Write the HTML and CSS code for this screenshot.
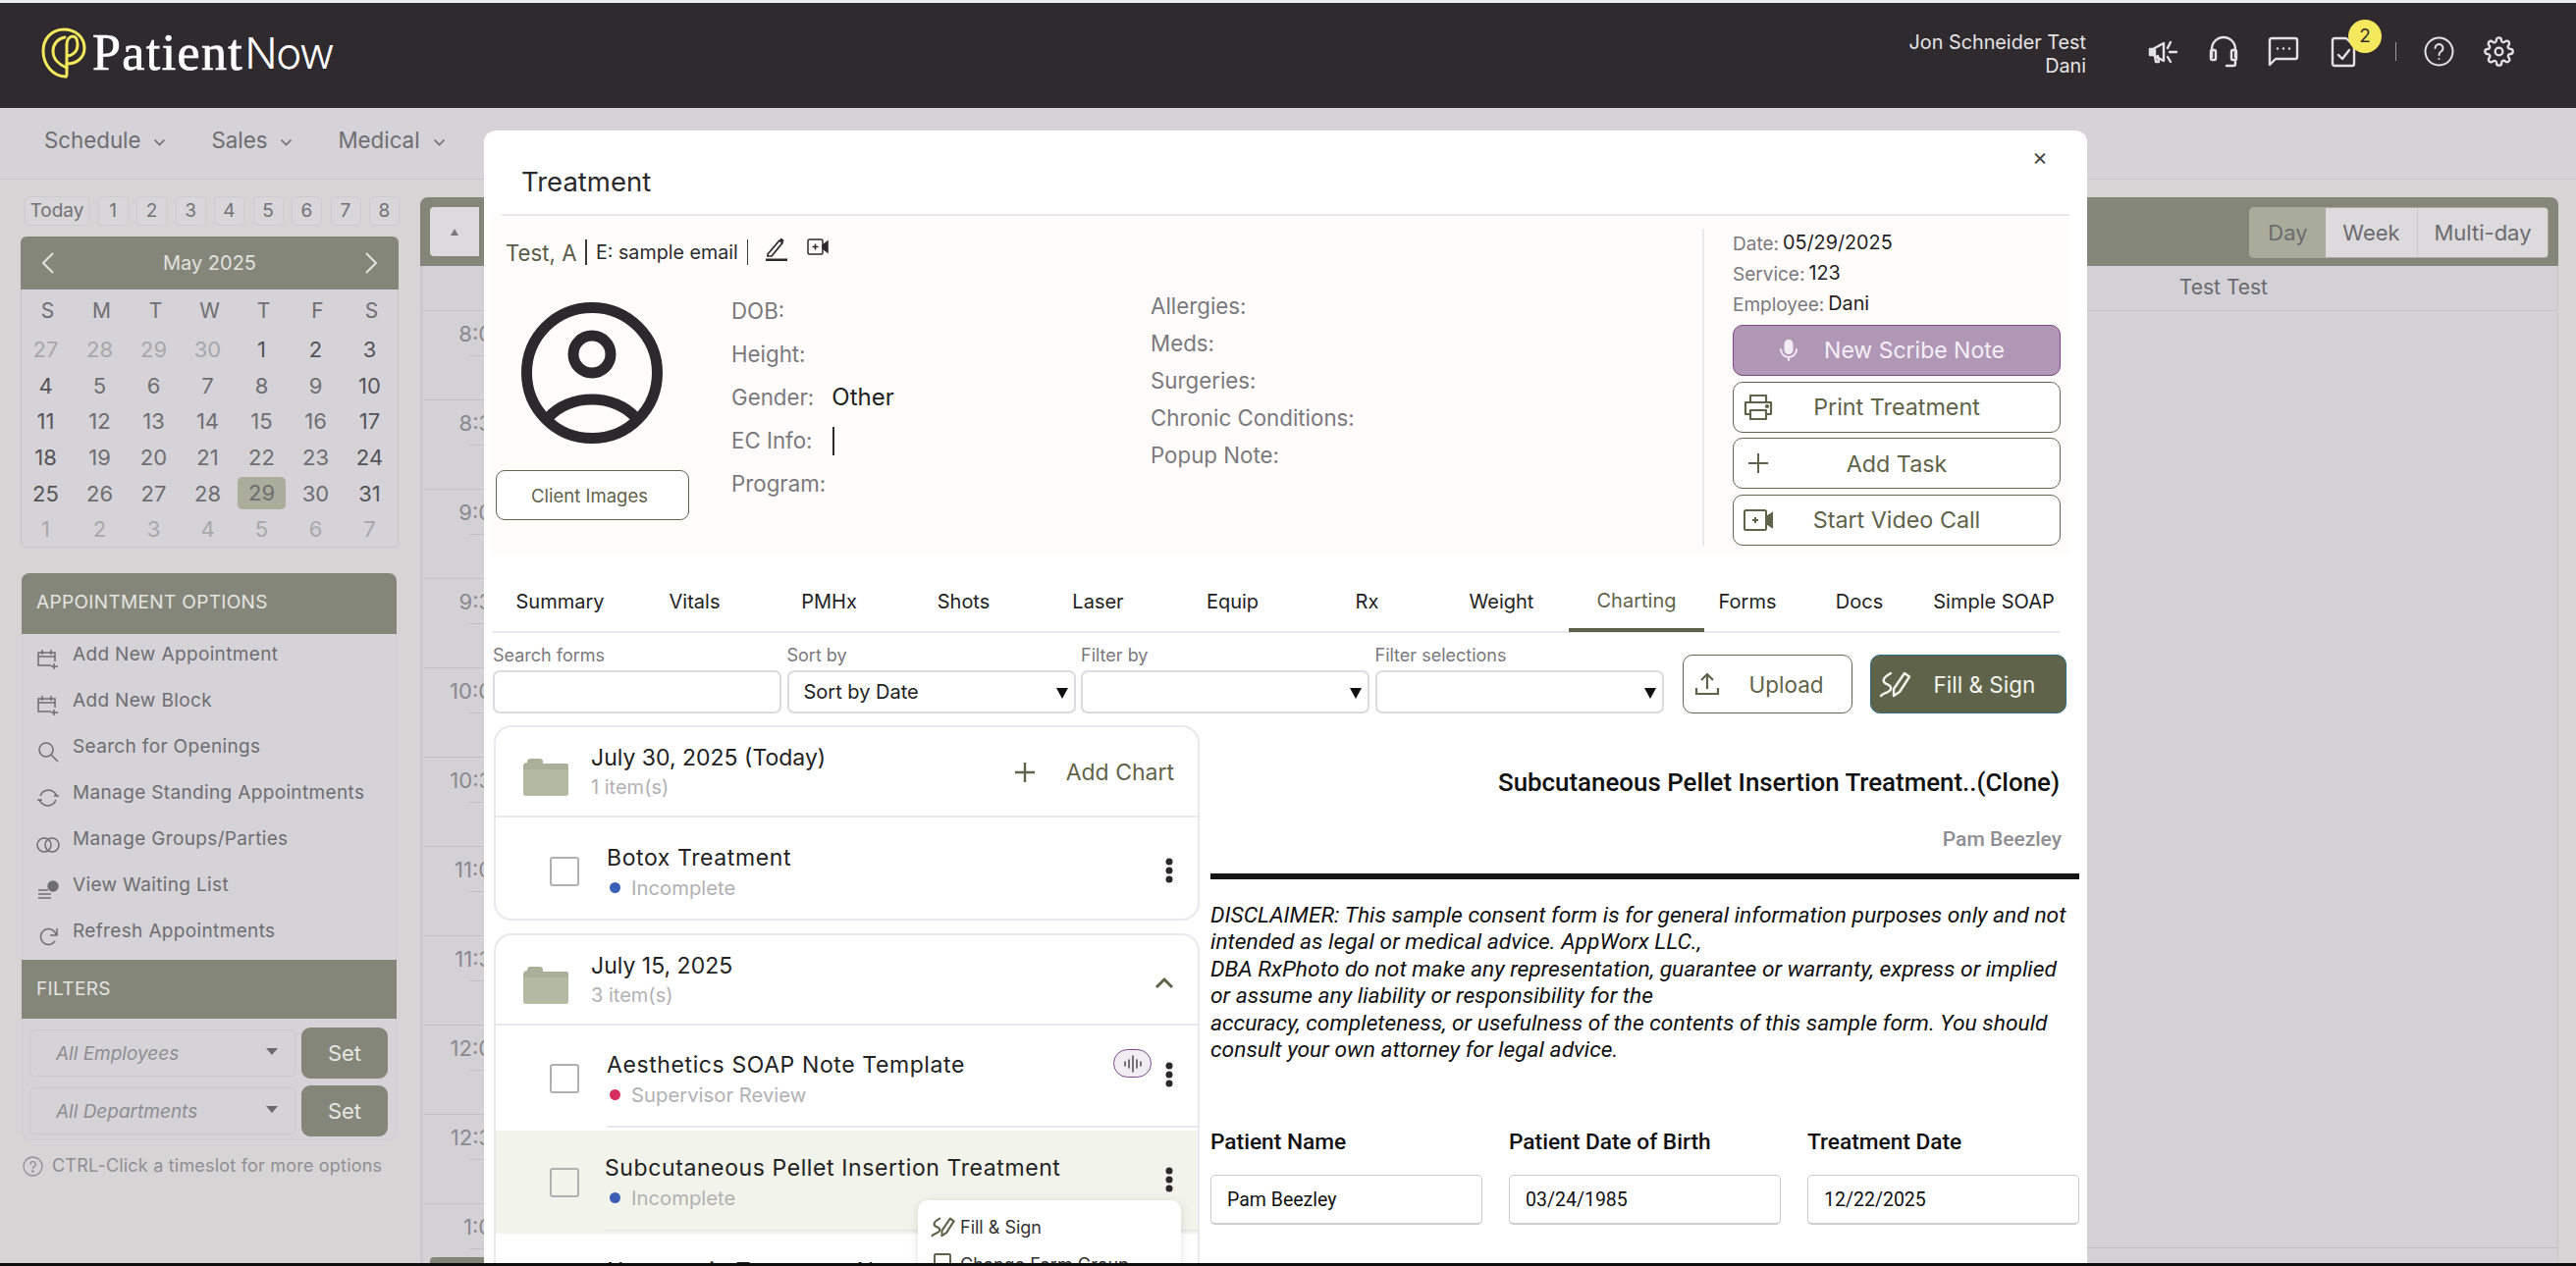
FILE: index.html
```html
<!DOCTYPE html>
<html lang="en">
<head>
<meta charset="utf-8">
<title>PatientNow - Treatment</title>
<link rel="stylesheet" href="styles.css">
</head>
<body>
<div class="topline"></div>
<header class="hdr">
  <div class="logo">
    <svg class="logo-mark" viewBox="0 0 46 52" fill="none" stroke="#f4e85c" stroke-width="3" stroke-linecap="round" stroke-linejoin="round">
      <path d="M25 50C12 50 2 38 2 24 2 11 11 2 23 2c12 0 21 8 21 19 0 10-8 16-18 16"/>
      <path d="M25 50c1 0 1-1 1-3V17c0-5 3-8 6-8 4 0 5 4 5 9 0 6-5 11-11 11"/>
      <path d="M24 10c-7 1-12 7-12 14 0 8 6 14 14 17"/>
    </svg>
    <span class="logo-a">Patient</span><span class="logo-b">Now</span>
  </div>
  <div class="hdr-right">
    <div class="hdr-user"><div>Jon Schneider Test</div><div>Dani</div></div>
    <div class="hdr-icons">
      <span class="hi"><svg width="32" height="26" viewBox="0 0 32 26" fill="none" stroke="#e4e2e4" stroke-width="2.4" stroke-linecap="round" stroke-linejoin="round"><path d="M2 10v6h3l11 6V4L5 10z"/><path d="M3 11v4h4v-4z" fill="#e4e2e4"/><path d="M7 16l1 7h3l-1-6"/><path d="M20 9l3-6M22 13h7M20 18l3 5"/></svg></span>
      <span class="hi"><svg width="30" height="33" viewBox="0 0 30 33" fill="none" stroke="#e4e2e4" stroke-width="2.4" stroke-linecap="round" stroke-linejoin="round"><path d="M3 22V14a12 12 0 0 1 24 0v8"/><rect x="2" y="15" width="5" height="10" rx="1.5"/><rect x="23" y="15" width="5" height="10" rx="1.5"/><path d="M27 25v4a2 2 0 0 1-2 2h-7"/></svg></span>
      <span class="hi"><svg width="32" height="31" viewBox="0 0 32 31" fill="none" stroke="#e4e2e4" stroke-width="2.4" stroke-linejoin="round"><path d="M2 29V4a2 2 0 0 1 2-2h24a2 2 0 0 1 2 2v17a2 2 0 0 1-2 2H8z"/><circle cx="10" cy="12.5" r="1.2" fill="#e4e2e4" stroke="none"/><circle cx="16" cy="12.5" r="1.2" fill="#e4e2e4" stroke="none"/><circle cx="22" cy="12.5" r="1.2" fill="#e4e2e4" stroke="none"/></svg></span>
      <span class="hi hi-task">
        <svg width="26" height="32" viewBox="0 0 26 32" fill="none" stroke="#e4e2e4" stroke-width="2.4" stroke-linecap="round" stroke-linejoin="round"><path d="M4 2h12l8 8v18a2 2 0 0 1-2 2H4a2 2 0 0 1-2-2V4a2 2 0 0 1 2-2z"/><path d="M8 19l4 4 7-9"/></svg>
        <span class="badge">2</span>
      </span>
      <span class="hdr-sep"></span>
      <span class="hi"><svg width="31" height="31" viewBox="0 0 31 31" fill="none" stroke="#e4e2e4" stroke-width="2" stroke-linecap="round"><circle cx="15.5" cy="15.5" r="14"/><path d="M11.5 12a4 4 0 1 1 6 3.5c-1.4.8-2 1.5-2 3.5"/><circle cx="15.5" cy="23" r="1" fill="#e4e2e4" stroke="none"/></svg></span>
      <span class="hi"><svg width="31" height="31" viewBox="0 0 24 24" fill="none" stroke="#e4e2e4" stroke-width="1.8" stroke-linecap="round" stroke-linejoin="round"><circle cx="12" cy="12" r="3"/><path d="M19.4 15a1.65 1.65 0 0 0 .33 1.82l.06.06a2 2 0 1 1-2.83 2.83l-.06-.06a1.65 1.65 0 0 0-2.82 1.17V21a2 2 0 1 1-4 0v-.09A1.65 1.65 0 0 0 7.26 19.74l-.06.06a2 2 0 1 1-2.83-2.83l.06-.06A1.65 1.65 0 0 0 3.26 14.09H3a2 2 0 1 1 0-4h.09A1.65 1.65 0 0 0 4.26 7.27l-.06-.06a2 2 0 1 1 2.83-2.83l.06.06A1.65 1.65 0 0 0 9.91 3.26V3a2 2 0 1 1 4 0v.09a1.65 1.65 0 0 0 2.82 1.17l.06-.06a2 2 0 1 1 2.83 2.83l-.06.06a1.65 1.65 0 0 0 1.17 2.82H21a2 2 0 1 1 0 4h-.09a1.65 1.65 0 0 0-1.51 1z"/></svg></span>
    </div>
  </div>
</header>

<nav class="nav">
  <span class="nav-item">Schedule <svg class="chev" viewBox="0 0 12 8" fill="none" stroke="currentColor" stroke-width="1.6"><path d="M1 1.5l5 5 5-5"/></svg></span>
  <span class="nav-item">Sales <svg class="chev" viewBox="0 0 12 8" fill="none" stroke="currentColor" stroke-width="1.6"><path d="M1 1.5l5 5 5-5"/></svg></span>
  <span class="nav-item">Medical <svg class="chev" viewBox="0 0 12 8" fill="none" stroke="currentColor" stroke-width="1.6"><path d="M1 1.5l5 5 5-5"/></svg></span>
</nav>

<main class="main">
  <aside class="side">
    <div class="quick">
      <span class="qb qb-today">Today</span><span class="qb">1</span><span class="qb">2</span><span class="qb">3</span><span class="qb">4</span><span class="qb">5</span><span class="qb">6</span><span class="qb">7</span><span class="qb">8</span>
    </div>
    <section class="cal">
      <div class="cal-head">
        <svg width="16" height="24" viewBox="0 0 16 24" fill="none" stroke="#e2e2df" stroke-width="2"><path d="M13 2L3 12l10 10"/></svg>
        <span>May 2025</span>
        <svg width="16" height="24" viewBox="0 0 16 24" fill="none" stroke="#e2e2df" stroke-width="2"><path d="M3 2l10 10L3 22"/></svg>
      </div>
      <div class="cal-dow"><span>S</span><span>M</span><span>T</span><span>W</span><span>T</span><span>F</span><span>S</span></div>
      <div class="cal-grid">
        <span class="mu">27</span><span class="mu">28</span><span class="mu">29</span><span class="mu">30</span><span class="dk">1</span><span class="dk">2</span><span class="dk">3</span>
        <span class="dk">4</span><span>5</span><span>6</span><span>7</span><span>8</span><span>9</span><span class="dk">10</span>
        <span class="dk">11</span><span>12</span><span>13</span><span>14</span><span>15</span><span>16</span><span class="dk">17</span>
        <span class="dk">18</span><span>19</span><span>20</span><span>21</span><span>22</span><span>23</span><span class="dk">24</span>
        <span class="dk">25</span><span>26</span><span>27</span><span>28</span><span class="sel"><b>29</b></span><span>30</span><span class="dk">31</span>
        <span class="mu">1</span><span class="mu">2</span><span class="mu">3</span><span class="mu">4</span><span class="mu">5</span><span class="mu">6</span><span class="mu">7</span>
      </div>
    </section>

    <section class="opts">
      <div class="opts-head">APPOINTMENT OPTIONS</div>
      <ul class="opts-list">
        <li><svg viewBox="0 0 24 22" fill="none" stroke="currentColor" stroke-width="1.5"><path d="M15 17H2V4h17v9M2 8h17M6 1v5M15 1v5M18 15v6M15 18h7"/></svg>Add New Appointment</li>
        <li><svg viewBox="0 0 24 22" fill="none" stroke="currentColor" stroke-width="1.5"><path d="M15 17H2V4h17v9M2 8h17M6 1v5M15 1v5M18 15v6M15 18h7"/></svg>Add New Block</li>
        <li><svg viewBox="0 0 24 22" fill="none" stroke="currentColor" stroke-width="1.5"><circle cx="10" cy="9" r="7"/><path d="M15 14l7 7"/></svg>Search for Openings</li>
        <li><svg viewBox="0 0 24 22" fill="none" stroke="currentColor" stroke-width="1.5"><path d="M4 9a9 9 0 0 1 15-3l2 3M20 13a9 9 0 0 1-15 3l-2-3M18 9h5M1 13h5"/></svg>Manage Standing Appointments</li>
        <li><svg viewBox="0 0 24 22" fill="none" stroke="currentColor" stroke-width="1.5"><circle cx="8" cy="12" r="7"/><circle cx="16" cy="12" r="7"/></svg>Manage Groups/Parties</li>
        <li><svg viewBox="0 0 24 22" fill="none" stroke="currentColor" stroke-width="1.5"><path d="M2 11h10M2 15h13M2 19h13"/><circle cx="17" cy="7" r="5" fill="currentColor"/></svg>View Waiting List</li>
        <li><svg viewBox="0 0 24 22" fill="none" stroke="currentColor" stroke-width="1.5"><path d="M19 16a8 8 0 1 1 0-9l2 3M21 3v7h-7"/></svg>Refresh Appointments</li>
      </ul>
      <div class="opts-head opts-head-f">FILTERS</div>
      <div class="filters">
        <div class="f-row"><div class="f-sel">All Employees<i class="tri"></i></div><button class="f-set">Set</button></div>
        <div class="f-row"><div class="f-sel">All Departments<i class="tri"></i></div><button class="f-set">Set</button></div>
      </div>
    </section>
    <p class="hint"><svg width="21" height="21" viewBox="0 0 21 21" fill="none" stroke="#8f8e92" stroke-width="1.3" stroke-linecap="round"><circle cx="10.5" cy="10.5" r="9.5"/><path d="M8 8.2a2.6 2.6 0 1 1 3.8 2.4c-.9.5-1.3 1-1.3 2.1"/><circle cx="10.5" cy="15.5" r=".7" fill="#8f8e92"/></svg>CTRL-Click a timeslot for more options</p>
  </aside>

  <section class="sched">
    <div class="sched-head">
      <div class="sched-nav"><span class="sn sn-up"><i></i></span></div>
      <div class="views"><span class="v v-on">Day</span><span class="v v-w">Week</span><span class="v v-m">Multi-day</span></div>
    </div>
    <div class="sched-res">Test Test</div>
    <div class="sched-body">
      <div class="times">
        <div class="slot"><span>8:00</span></div>
        <div class="slot"><span>8:30</span></div>
        <div class="slot"><span>9:00</span></div>
        <div class="slot"><span>9:30</span></div>
        <div class="slot"><span>10:00</span></div>
        <div class="slot"><span>10:30</span></div>
        <div class="slot"><span>11:00</span></div>
        <div class="slot"><span>11:30</span></div>
        <div class="slot"><span>12:00</span></div>
        <div class="slot"><span>12:30</span></div>
        <div class="slot"><span>1:00</span></div>
      </div>
      <div class="grid-col"><div class="grid-line"></div></div>
    </div>
  </section>
</main>

<div class="modal">
  <div class="m-head">
    <h2 class="m-title">Treatment</h2>
    <span class="m-close">×</span>
  </div>

  <div class="pt">
    <div class="pt-main">
      <div class="pt-name">
        <span class="pt-n">Test, A</span><span class="pt-bar"></span><span class="pt-e">E: sample email</span><span class="pt-bar"></span>
        <svg class="pt-ic1" width="24" height="24" viewBox="0 0 24 24" fill="none" stroke="#2c282c" stroke-width="1.7"><path d="M3 17L15 3l3 2.5L7 19H3z"/><path d="M16 1.5l3 2.5" stroke-width="2.4"/><path d="M1 23h22" stroke-width="3"/></svg>
        <svg class="pt-ic2" width="22" height="18" viewBox="0 0 22 18" fill="none" stroke="#2c282c" stroke-width="1.5"><rect x="1" y="1" width="15" height="15" rx="1.5"/><path d="M8.5 5.5v6M5.5 8.5h6"/><path d="M16 7l5-4v11l-5-4z" fill="#2c282c"/></svg>
      </div>
      <div class="pt-body">
        <div class="pt-pic">
          <svg class="avatar" viewBox="0 0 144 144" fill="none" stroke="#2c282c" stroke-width="11"><circle cx="72" cy="72" r="66.5"/><circle cx="72" cy="53" r="19"/><path d="M28 117c10-11 26-18 44-18s34 7 44 18"/></svg>
          <button class="btn-out btn-client">Client Images</button>
        </div>
        <div class="pt-col1">
          <div>DOB:</div>
          <div>Height:</div>
          <div>Gender: <b class="val">Other</b></div>
          <div>EC Info: <i class="caret"></i></div>
          <div>Program:</div>
        </div>
        <div class="pt-col2">
          <div>Allergies:</div>
          <div>Meds:</div>
          <div>Surgeries:</div>
          <div>Chronic Conditions:</div>
          <div>Popup Note:</div>
        </div>
      </div>
    </div>
    <div class="pt-side">
      <div class="pt-line"><span>Date:</span> <b>05/29/2025</b></div>
      <div class="pt-line"><span>Service:</span> <b>123</b></div>
      <div class="pt-line"><span>Employee:</span> <b>Dani</b></div>
      <div class="pt-btns">
        <button class="sb sb-scribe"><svg width="20" height="24" viewBox="0 0 20 24" fill="none" stroke="#f3edf5" stroke-width="2" stroke-linecap="round"><rect x="6.5" y="2" width="7" height="13" rx="3.5" fill="#f3edf5"/><path d="M2 11a8 8 0 0 0 16 0M10 19v3"/></svg>New Scribe Note</button>
        <button class="sb"><svg width="30" height="28" viewBox="0 0 30 28" fill="none" stroke="#5f6349" stroke-width="2.2" stroke-linejoin="round"><path d="M7 9V2h16v7M7 21H2V9h26v12h-5"/><rect x="7" y="17" width="16" height="9"/><circle cx="24" cy="13" r="1" fill="#5f6349"/></svg><span>Print Treatment</span></button>
        <button class="sb"><svg width="22" height="22" viewBox="0 0 22 22" fill="none" stroke="#5f6349" stroke-width="2"><path d="M11 1v20M1 11h20"/></svg><span>Add Task</span></button>
        <button class="sb"><svg width="30" height="24" viewBox="0 0 30 24" fill="none" stroke="#5f6349" stroke-width="2"><rect x="1" y="2" width="22" height="20" rx="1.5"/><path d="M12 9v6M9 12h6"/><path d="M23 9l6-4v14l-6-4z" fill="#5f6349"/></svg><span>Start Video Call</span></button>
      </div>
    </div>
  </div>

  <div class="tabs">
    <span>Summary</span><span>Vitals</span><span>PMHx</span><span>Shots</span><span>Laser</span><span>Equip</span><span>Rx</span><span>Weight</span><span class="tab-on">Charting</span><span>Forms</span><span>Docs</span><span>Simple SOAP</span>
  </div>

  <div class="tools">
    <div class="tool"><label>Search forms</label><div class="box"></div></div>
    <div class="tool"><label>Sort by</label><div class="box">Sort by Date<i class="tri-b"></i></div></div>
    <div class="tool"><label>Filter by</label><div class="box"><i class="tri-b"></i></div></div>
    <div class="tool"><label>Filter selections</label><div class="box"><i class="tri-b"></i></div></div>
    <button class="tb tb-up"><svg width="26" height="24" viewBox="0 0 26 24" fill="none" stroke="#5f6349" stroke-width="2.2"><path d="M13 17V2M7 8l6-6 6 6M2 16v6h22v-6"/></svg>Upload</button>
    <button class="tb tb-fill"><svg width="34" height="30" viewBox="0 0 34 30" fill="none" stroke="#f4f4f0" stroke-width="2.4" stroke-linecap="round" stroke-linejoin="round"><path d="M15 20L26 4l5 3.5L21 23l-6 4z"/><path d="M12 4C5 8 3 11 6 14c3 2 7 2 6 6s-8 4-10 7"/></svg>Fill &amp; Sign</button>
  </div>

  <div class="split">
    <div class="list">
      <section class="card">
        <div class="c-head">
          <svg class="folder" viewBox="0 0 46 40"><path d="M4 6a4 4 0 0 1 4-4h8a4 4 0 0 1 4 4v1h23a3 3 0 0 1 3 3v27a3 3 0 0 1-3 3H3a3 3 0 0 1-3-3V10a4 4 0 0 1 4-4z" fill="#b3b9a3"/><path d="M0 13h46v-3a3 3 0 0 0-3-3H20V6a4 4 0 0 0-4-4H8a4 4 0 0 0-4 4v1a4 4 0 0 0-4 4z" fill="#a9af98"/></svg>
          <div class="c-txt"><div class="c-date">July 30, 2025 (Today)</div><div class="c-sub">1 item(s)</div></div>
          <div class="c-add"><svg width="24" height="24" viewBox="0 0 24 24" fill="none" stroke="#5f6349" stroke-width="2.4"><path d="M12 2v20M2 12h20"/></svg>Add Chart</div>
        </div>
        <div class="row">
          <span class="chk"></span>
          <div class="r-body">
            <div class="r-title">Botox Treatment</div>
            <div class="r-st"><i class="dot dot-b"></i>Incomplete</div>
          </div>
          <svg class="kebab" viewBox="0 0 8 26" fill="#2c282c"><circle cx="4" cy="4" r="3.5"/><circle cx="4" cy="13" r="3.5"/><circle cx="4" cy="22" r="3.5"/></svg>
        </div>
      </section>
      <section class="card card-2">
        <div class="c-head">
          <svg class="folder" viewBox="0 0 46 40"><path d="M4 6a4 4 0 0 1 4-4h8a4 4 0 0 1 4 4v1h23a3 3 0 0 1 3 3v27a3 3 0 0 1-3 3H3a3 3 0 0 1-3-3V10a4 4 0 0 1 4-4z" fill="#b3b9a3"/><path d="M0 13h46v-3a3 3 0 0 0-3-3H20V6a4 4 0 0 0-4-4H8a4 4 0 0 0-4 4v1a4 4 0 0 0-4 4z" fill="#a9af98"/></svg>
          <div class="c-txt"><div class="c-date">July 15, 2025</div><div class="c-sub">3 item(s)</div></div>
          <svg class="c-up" width="20" height="13" viewBox="0 0 20 13" fill="none" stroke="#5f6349" stroke-width="3"><path d="M2 11l8-8 8 8"/></svg>
        </div>
        <div class="row row-2">
          <span class="chk"></span>
          <div class="r-body">
            <div class="r-title">Aesthetics SOAP Note Template</div>
            <div class="r-st"><i class="dot dot-r"></i>Supervisor Review</div>
          </div>
          <span class="scribe"><svg width="18" height="18" viewBox="0 0 18 18" fill="none" stroke="#4a484c" stroke-width="1.5" stroke-linecap="round"><path d="M1 7v4M5 5v8M9 1v16M13 5v8M17 7v4"/></svg></span>
          <svg class="kebab" viewBox="0 0 8 26" fill="#2c282c"><circle cx="4" cy="4" r="3.5"/><circle cx="4" cy="13" r="3.5"/><circle cx="4" cy="22" r="3.5"/></svg>
        </div>
        <div class="row row-hi">
          <span class="chk"></span>
          <div class="r-body">
            <div class="r-title">Subcutaneous Pellet Insertion Treatment</div>
            <div class="r-st"><i class="dot dot-b"></i>Incomplete</div>
          </div>
          <svg class="kebab" viewBox="0 0 8 26" fill="#2c282c"><circle cx="4" cy="4" r="3.5"/><circle cx="4" cy="13" r="3.5"/><circle cx="4" cy="22" r="3.5"/></svg>
        </div>
        <div class="row row-3">
          <span class="chk"></span>
          <div class="r-body"><div class="r-title">Neurotoxin Treatment Note</div></div>
        </div>
        <div class="menu">
          <div class="mi"><svg width="26" height="24" viewBox="0 0 34 30" fill="none" stroke="#5f6349" stroke-width="2.8" stroke-linecap="round" stroke-linejoin="round"><path d="M15 20L26 4l5 3.5L21 23l-6 4z"/><path d="M12 4C5 8 3 11 6 14c3 2 7 2 6 6s-8 4-10 7"/></svg>Fill &amp; Sign</div>
          <div class="mi"><svg width="26" height="24" viewBox="0 0 26 24" fill="none" stroke="#5f6349" stroke-width="2"><rect x="4" y="2" width="16" height="20" rx="1"/></svg>Change Form Group</div>
        </div>
      </section>
    </div>

    <article class="doc">
      <h1 class="doc-title">Subcutaneous Pellet Insertion Treatment..(Clone)</h1>
      <div class="doc-author">Pam Beezley</div>
      <hr class="doc-rule">
      <p class="doc-disc">DISCLAIMER: This sample consent form is for general information purposes only and not<br>intended as legal or medical advice. AppWorx LLC.,<br>DBA RxPhoto do not make any representation, guarantee or warranty, express or implied<br>or assume any liability or responsibility for the<br>accuracy, completeness, or usefulness of the contents of this sample form. You should<br>consult your own attorney for legal advice.</p>
      <div class="doc-fields">
        <div><label>Patient Name</label><input class="doc-in" value="Pam Beezley"></div>
        <div><label>Patient Date of Birth</label><input class="doc-in" value="03/24/1985"></div>
        <div><label>Treatment Date</label><input class="doc-in" value="12/22/2025"></div>
      </div>
    </article>
  </div>
</div>

<div class="sched-foot"></div>
<div class="botline"></div>
</body>
</html>
```

FILE: styles.css
```css
* { box-sizing: border-box; }
html, body { margin: 0; height: 1290px; overflow: hidden; }
body { position: relative; width: 2624px; background: #d7d4d6; font-family: Inter, "Liberation Sans", sans-serif; color: #6a696d; }
button { font-family: inherit; cursor: pointer; }
p, ul, h1, h2 { margin: 0; padding: 0; }

.topline { height: 3px; background: #e6eeec; }
.botline { position: absolute; left: 0; right: 0; bottom: 0; height: 3px; background: #0d0d0d; z-index: 9; }

/* header */
.hdr { height: 107px; background: #2e2a2e; display: flex; align-items: center; justify-content: space-between; padding: 0 48px 0 42px; }
.logo { display: flex; align-items: center; color: #fff; height: 60px; margin-bottom: 6px; }
.logo-mark { width: 46px; height: 52px; margin-right: 6px; }
.logo-a { font-family: "Liberation Serif", serif; font-weight: 400; font-size: 52px; letter-spacing: 1.4px; -webkit-text-stroke: .7px #fff; }
.logo-b { font-family: Inter, sans-serif; font-weight: 300; font-size: 44px; letter-spacing: -1.5px; margin-left: 1px; }
.hdr-right { display: flex; align-items: center; }
.hdr-user { text-align: right; color: #e6e4e6; font-size: 19.8px; line-height: 24px; padding-bottom: 3px; }
.hdr-icons { display: flex; align-items: center; margin-left: 48px; padding-bottom: 8px; }
.hi { width: 61px; height: 40px; display: flex; align-items: center; justify-content: center; position: relative; }
.badge { position: absolute; left: 36px; top: -13px; width: 34px; height: 34px; border-radius: 50%; background: #f5e85c; color: #2e2a2e; font-size: 19px; display: flex; align-items: center; justify-content: center; }
.hdr-sep { width: 1px; height: 19px; background: #9a989b; margin: 0 13px 0 23px; }

/* nav */
.nav { height: 73px; background: #d5d3d7; border-bottom: 1px solid #c9c7cb; display: flex; align-items: flex-start; padding: 19px 0 0 45px; gap: 46px; }
.nav-item { display: flex; align-items: center; gap: 13px; font-size: 22.3px; line-height: 28px; color: #6e6d71; }
.chev { width: 13px; height: 8px; margin-top: 3px; }

/* main */
.main { display: flex; height: 1104px; }
.side { width: 428px; padding-top: 17px; flex: none; }
.quick { display: flex; gap: 8.5px; padding-left: 25px; }
.qb { width: 31px; height: 30px; border: 1px solid #cdcbce; border-radius: 5px; background: #d8d6d9; font-size: 19px; line-height: 28px; text-align: center; color: #737276; }
.qb-today { width: 66px; }

.cal { margin: 11px 0 0 21px; width: 385px; height: 317px; border: 1px solid #c8c6c9; border-top: 0; border-radius: 6px; background: #d5d3d7; }
.cal-head { height: 54px; margin: 0 -1px; background: #84867a; border-radius: 6px 6px 0 0; display: flex; align-items: center; justify-content: space-between; padding: 0 20px; color: #e2e2df; font-size: 20px; }
.cal-dow { display: grid; grid-template-columns: repeat(7, 1fr); height: 43px; align-items: center; text-align: center; font-size: 21px; color: #6e6d71; margin: 0 -1px; }
.cal-grid { display: grid; grid-template-columns: repeat(7, 55px); grid-auto-rows: 36.6px; align-items: center; text-align: center; font-size: 22px; margin-left: -3px; color: #6e6d71; }
.cal-grid .mu { color: #a8a7ab; }
.cal-grid .dk { color: #545357; }
.cal-grid .sel b { display: block; margin: 0 3px; height: 33px; line-height: 33px; border-radius: 5px; background: #aaad9c; font-weight: 400; }

.opts { margin: 26px 0 0 22px; width: 382px; height: 578px; border: 1px solid #cfcdd0; border-top: 0; border-radius: 8px; background: #d5d3d7; }
.opts-head { height: 62px; margin: 0 -1px; background: #84867a; border-radius: 8px 8px 0 0; color: #e4e4e1; font-size: 19px; font-weight: 400; letter-spacing: .35px; padding: 14px 0 0 15px; line-height: 32px; }
.opts-head-f { height: 60px; border-radius: 0; }
.opts-list { list-style: none; padding-top: 3px; height: 332px; }
.opts-list li { height: 47px; display: flex; align-items: flex-start; font-size: 19px; line-height: 36px; padding-left: 14px; color: #6e6d71; letter-spacing: .35px; }
.opts-list svg { width: 24px; height: 22px; margin: 12px 13px 0 0; flex: none; }
.filters { padding: 9px 7px 0; display: flex; flex-direction: column; gap: 7px; }
.f-row { display: flex; gap: 6px; align-items: center; }
.f-sel { width: 271px; height: 48px; border: 1px solid #cbc9cc; border-radius: 5px; font-style: italic; font-size: 19px; line-height: 48px; padding-left: 26px; color: #8e8d91; position: relative; }
.tri { position: absolute; right: 17px; top: 18px; border-style: solid; border-width: 7px 6px 0; border-color: #6a696d transparent transparent; width: 0; height: 0; }
.f-set { width: 88px; height: 52px; border: 0; border-radius: 9px; background: #84867a; color: #e6e6e3; font-size: 22px; }
.hint { margin: 15px 0 0 23px; display: flex; align-items: center; gap: 9px; font-size: 18px; line-height: 22px; color: #8f8e92; letter-spacing: .2px; white-space: nowrap; }

/* schedule behind the modal */
.sched { width: 2178px; margin-top: 18px; border-left: 3px solid #cbc9cc; border-right: 1px solid #c8c6c9; background: #d3d1d5; border-radius: 8px 8px 0 0; margin-right: 18px; }
.sched-head { height: 70px; margin: 0 -1px 0 -3px; background: #84867a; border-radius: 8px 8px 0 0; display: flex; justify-content: space-between; padding: 10px 10px 0; align-items: flex-start; }
.sn { display: flex; align-items: center; justify-content: center; width: 50px; height: 50px; background: #dcdadc; border-radius: 4px 0 0 4px; }
.sn-up i { width: 0; height: 0; border-style: solid; border-width: 0 4px 7px; border-color: transparent transparent #7a797d; }
.views { display: flex; height: 52px; border-radius: 4px; overflow: hidden; border: 1px solid #a9ac9b; }
.v { display: flex; align-items: center; justify-content: center; font-size: 22px; color: #6c6b6f; background: #dcdadc; }
.v-on { width: 77px; background: #a9ac9b; }
.v-w { width: 94px; border-right: 1px solid #c9c7ca; }
.v-m { width: 132px; }
.sched-res { height: 46px; line-height: 44px; text-align: right; padding-right: 295px; border-bottom: 1px solid #c6c4c8; font-size: 21px; color: #6a696d; }
.sched-body { display: flex; }
.times { width: 93px; flex: none; }
.slot { height: 91px; border-bottom: 1px solid #c3c1c5; text-align: right; padding-right: 9px; margin-left: 1px; color: #8a898d; font-size: 22px; line-height: 46px; }
.slot span { display: block; height: 45px; }
.slot::after { content: ""; display: block; height: 1px; margin-left: 46px; margin-right: -9px; background: #c3c1c5; }
.grid-col { flex: 1; }
.grid-line { margin-top: 954px; height: 1px; background: #c3c1c5; }
.sched-foot { position: absolute; left: 438px; top: 1281px; width: 60px; height: 9px; background: #84867a; border-radius: 4px 0 0 0; }

/* modal */
.modal { position: absolute; left: 493px; top: 133px; width: 1633px; height: 1157px; background: #fff; border-radius: 12px 12px 0 0; overflow: hidden; z-index: 5; color: #222; }
.m-head { height: 87px; margin: 0 18px; border-bottom: 2px solid #e7e7ec; padding: 34px 0 0 20px; position: relative; }
.m-title { font-size: 27.5px; font-weight: 400; line-height: 36px; color: #2a2a2c; }
.m-close { position: absolute; right: 22px; top: 10px; font-size: 24px; line-height: 34px; color: #444; }

.pt { display: flex; height: 345px; margin: 0 18px 0 8px; background: #fffcfb; }
.pt-main { width: 1233px; flex: none; }
.pt-name { display: flex; align-items: center; height: 32px; margin: 21px 0 0 14px; }
.pt-n { font-size: 22.2px; color: #5a5c4a; }
.pt-e { font-size: 19.7px; color: #2c2c2c; }
.pt-bar { width: 1.5px; height: 26px; background: #3a3a3a; margin: 0 9px; }
.pt-ic1 { margin: -6px 0 0 8px; }
.pt-ic2 { margin: -10px 0 0 19px; }
.pt-body { display: flex; margin-top: 20px; font-size: 22.3px; color: #7a797d; }
.pt-pic { width: 197px; margin-left: 4px; padding-top: 15px; flex: none; }
.avatar { display: block; width: 144px; height: 144px; margin-left: 26px; }
.btn-out { background: #fff; border: 1.5px solid #62664f; border-radius: 9px; }
.btn-client { display: block; width: 197px; height: 51px; margin-top: 27px; padding: 0 6px 0 0; font-size: 18.5px; color: #5f6349; }
.pt-col1 { width: 427px; margin-left: 43px; padding-top: 2px; flex: none; }
.pt-col1 > div { height: 44px; line-height: 44px; display: flex; align-items: center; gap: 18px; }
.val { font-weight: 400; font-size: 24px; color: #222; }
.caret { width: 2px; height: 29px; background: #2c2c2c; margin-left: 2px; }
.pt-col2 > div { height: 38px; line-height: 38px; }

.pt-side { flex: 1; margin-top: 13px; height: 323px; border-left: 2px solid #ebe8ee; padding-left: 29px; }
.pt-line { height: 31px; line-height: 31px; display: flex; gap: 4px; font-size: 19px; color: #7a797d; }
.pt-line b { font-weight: 400; font-size: 19.8px; color: #222; margin-top: -1px; }
.pt-btns { width: 334px; margin-top: 5px; display: flex; flex-direction: column; gap: 5.5px; }
.sb { height: 52px; display: grid; grid-template-columns: 50px 1fr 50px; align-items: center; justify-items: center; padding: 0; background: #fff; border: 1.5px solid #62664f; border-radius: 10px; color: #5f6349; font-size: 23.3px; }
.sb-scribe { display: flex; justify-content: center; gap: 26px; padding: 0 10px 0 0; font-size: 23px; background: #b097b6; border-color: #7e4a8a; color: #f5f0f6; }

.tabs { display: grid; grid-template-columns: repeat(8, 137px) 138px 88px 140px 134px; width: 1596px; height: 80px; margin-left: 9px; border-bottom: 2px solid #e9e8ec; font-size: 20px; color: #222; }
.tabs span { display: flex; align-items: center; justify-content: center; padding-top: 16px; height: 79px; }
.tabs .tab-on { color: #5f6349; border-bottom: 4px solid #5f6349; padding-top: 18px; }

.tools { display: flex; align-items: flex-end; height: 82px; margin-left: 9px; gap: 5.5px; }
.tool { width: 294px; }
.tool label { display: block; font-size: 18px; line-height: 22px; margin-bottom: 4px; color: #7a797d; }
.box { height: 44px; border: 2px solid #dcdbe2; border-radius: 7px; background: #fff; line-height: 40px; padding-left: 15px; font-size: 20px; color: #222; position: relative; }
.tri-b { position: absolute; right: 6px; top: 16px; width: 0; height: 0; border-style: solid; border-width: 11px 6px 0; border-color: #111 transparent transparent; }
.tb { height: 60px; display: flex; align-items: center; font-size: 22.5px; border-radius: 10px; }
.tb-up { width: 173px; margin-left: 13.5px; background: #fff; border: 1.5px solid #62664f; color: #5f6349; padding: 0 0 0 11px; gap: 30px; }
.tb-fill { width: 200px; margin-left: 12.5px; background: #5f6349; border: 1.5px solid #2a6f8f; color: #f5f5f1; padding: 0 0 0 8px; gap: 22px; }

.split { display: flex; margin-left: 10px; }
.list { width: 719px; padding-top: 12px; flex: none; display: flex; flex-direction: column; gap: 13px; }
.card { border: 2px solid #e8e8ee; border-radius: 18px; background: #fff; height: 199px; position: relative; }
.card-2 { height: 600px; border-bottom: 0; border-radius: 18px 18px 0 0; }
.c-head { height: 94px; border-bottom: 2px solid #e8e8ee; display: flex; align-items: center; padding: 0 24px 0 28px; margin: -2px 0 0; }
.folder { width: 46px; height: 40px; flex: none; margin-top: 12px; }
.c-txt { margin-left: 23px; flex: 1; padding-top: 4px; }
.c-date { font-size: 23px; line-height: 30px; color: #222; }
.c-sub { font-size: 20px; line-height: 30px; color: #b2b1b4; }
.c-add { display: flex; align-items: center; gap: 30px; font-size: 23px; color: #5f6349; margin-top: 4px; }
.c-up { margin: 8px 0 0 0; }
.row { display: flex; height: 104px; padding-left: 55px; position: relative; }
.row .chk { margin-top: 40px; }
.chk { width: 30px; height: 30px; border: 2px solid #b0afb2; border-radius: 3px; flex: none; margin-right: 28px; }
.r-body { flex: 1; padding-top: 26px; }
.r-title { font-size: 23px; line-height: 30px; color: #222; letter-spacing: .6px; }
.r-st { display: flex; align-items: center; font-size: 20.3px; line-height: 31px; color: #b2b1b4; }
.dot { width: 11px; height: 11px; border-radius: 50%; margin: 0 11px 0 3px; flex: none; }
.dot-b { background: #3a5fb5; }
.dot-r { background: #d82c5f; }
.kebab { position: absolute; left: 682px; top: 41px; width: 8px; height: 26px; }
.row-2 .r-body { border-bottom: 2px solid #e8e8ee; padding-top: 25px; }
.row-2 .chk { margin-top: 39px; }
.row-hi { background: #f2f3ea; margin-top: 3px; height: 105px; }
.row-hi .chk { margin-top: 38px; }
.row-hi .r-body { padding-top: 23px; margin-left: -2px; border-bottom: 2px solid #e8e8ee; height: 103px; }
.row-hi .dot { margin-left: 5px; }
.row-hi .kebab { top: 37px; }
.row-2 .kebab { top: 37px; }
.row-3 { height: 60px; }
.row-3 .chk { margin-top: 40px; }
.row-3 .r-body { padding-top: 23px; }
.scribe { position: absolute; left: 629px; top: 24px; width: 39px; height: 29px; border: 1.5px solid #7e4a8a; border-radius: 15px; background: #f0eef2; display: flex; align-items: center; justify-content: center; }
.menu { position: absolute; left: 430px; top: 270px; width: 268px; height: 200px; background: #fff; border-radius: 10px; box-shadow: 0 2px 10px rgba(60, 60, 60, .16); padding-top: 9px; z-index: 2; }
.mi { display: flex; align-items: center; gap: 4px; height: 36px; margin-bottom: 2px; padding-left: 13px; font-size: 18px; color: #333; }

.doc { width: 885px; margin-left: 11px; padding-top: 53px; font-family: Roboto, "Liberation Sans", sans-serif; color: #111; }
.doc-title { font-size: 25.9px; font-weight: 500; line-height: 34px; text-align: right; padding-right: 20px; }
.doc-author { margin-top: 27px; font-size: 21px; line-height: 28px; font-weight: 500; text-align: right; padding-right: 18px; color: #8f8e92; }
.doc-rule { border: 0; height: 6px; margin: 21px 0 0; background: #161616; }
.doc-disc { margin-top: 23px; font-style: italic; font-size: 22.8px; line-height: 27.4px; white-space: nowrap; }
.doc-fields { display: grid; grid-template-columns: repeat(3, 277px); gap: 27px; margin-top: 67px; }
.doc-fields label { display: block; font-size: 22.7px; line-height: 28px; font-weight: 500; margin-bottom: 19px; }
.doc-in { display: block; width: 100%; height: 51px; border: 1.5px solid #ccc; border-bottom-width: 2.5px; border-radius: 5px; padding: 0 16px; font-family: inherit; font-size: 19.5px; color: #111; background: #fff; }
```
